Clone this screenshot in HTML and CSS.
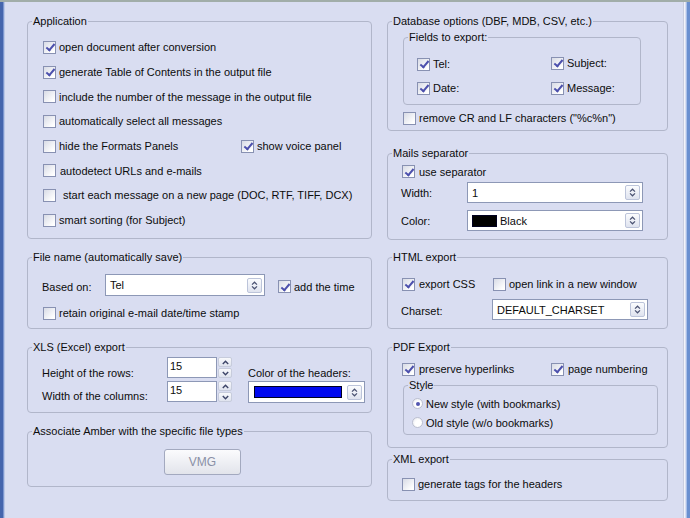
FILE: index.html
```html
<!DOCTYPE html>
<html>
<head>
<meta charset="utf-8">
<link rel="stylesheet" href="styles.css">
</head>
<body>
<div class="window">
  <div class="edge-l"></div>
  <div class="main">
    <div class="col col-left">
      <fieldset class="grp g-app">
        <legend>Application</legend>
        <div class="list">
          <div class="row"><div class="cb"><span class="box on"></span>open document after conversion</div></div>
          <div class="row"><div class="cb"><span class="box on"></span>generate Table of Contents in the output file</div></div>
          <div class="row"><div class="cb"><span class="box"></span>include the number of the message in the output file</div></div>
          <div class="row"><div class="cb"><span class="box"></span>automatically select all messages</div></div>
          <div class="row"><div class="cb w198"><span class="box"></span>hide the Formats Panels</div><div class="cb"><span class="box on"></span>show voice panel</div></div>
          <div class="row"><div class="cb"><span class="box"></span><span class="t4">autodetect URLs and e-mails</span></div></div>
          <div class="row"><div class="cb"><span class="box"></span><span class="t7">start each message on a new page (DOC, RTF, TIFF, DCX)</span></div></div>
          <div class="row"><div class="cb"><span class="box"></span>smart sorting (for Subject)</div></div>
        </div>
      </fieldset>

      <fieldset class="grp g-file">
        <legend>File name (automatically save)</legend>
        <div class="file-row1">
          <span class="lbl w63 low">Based on:</span>
          <div class="combo w160"><span class="ctext">Tel</span><span class="cbtn"><svg width="7" height="9" viewBox="0 0 7 9"><path d="M1 3.6 L3.5 1.2 L6 3.6 M1 5.4 L3.5 7.8 L6 5.4" fill="none" stroke="#4a5272" stroke-width="1.2"/></svg></span></div>
          <div class="cb ml13 low"><span class="box on"></span>add the time</div>
        </div>
        <div class="file-row2">
          <div class="cb"><span class="box"></span>retain original e-mail date/time stamp</div>
        </div>
      </fieldset>

      <fieldset class="grp g-xls">
        <legend>XLS (Excel) export</legend>
        <div class="xls-grid">
          <span class="lbl xl1">Height of the rows:</span>
          <div class="edit">15</div>
          <div class="spin"><span><svg width="7" height="5" viewBox="0 0 7 5"><path d="M0.8 4 L3.5 1.2 L6.2 4" fill="none" stroke="#3c4468" stroke-width="1.4"/></svg></span><span><svg width="7" height="5" viewBox="0 0 7 5"><path d="M0.8 1 L3.5 3.8 L6.2 1" fill="none" stroke="#3c4468" stroke-width="1.4"/></svg></span></div>
          <span class="lbl xl1 xc">Color of the headers:</span>
          <span class="lbl xl2">Width of the columns:</span>
          <div class="edit">15</div>
          <div class="spin"><span><svg width="7" height="5" viewBox="0 0 7 5"><path d="M0.8 4 L3.5 1.2 L6.2 4" fill="none" stroke="#3c4468" stroke-width="1.4"/></svg></span><span><svg width="7" height="5" viewBox="0 0 7 5"><path d="M0.8 1 L3.5 3.8 L6.2 1" fill="none" stroke="#3c4468" stroke-width="1.4"/></svg></span></div>
          <div class="combo ccolor"><span class="swatch blue"></span><span class="ctext"></span><span class="cbtn"><svg width="7" height="9" viewBox="0 0 7 9"><path d="M1 3.6 L3.5 1.2 L6 3.6 M1 5.4 L3.5 7.8 L6 5.4" fill="none" stroke="#4a5272" stroke-width="1.2"/></svg></span></div>
        </div>
      </fieldset>

      <fieldset class="grp g-assoc">
        <legend>Associate Amber with the specific file types</legend>
        <div class="btn-vmg">VMG</div>
      </fieldset>
    </div>

    <div class="col col-right">
      <fieldset class="grp g-db">
        <legend>Database options (DBF, MDB, CSV, etc.)</legend>
        <fieldset class="grp g-fields">
          <legend>Fields to export:</legend>
          <div class="fields-grid">
            <div class="cb"><span class="box on"></span>Tel:</div>
            <div class="cb up2"><span class="box on"></span>Subject:</div>
            <div class="cb"><span class="box on"></span>Date:</div>
            <div class="cb"><span class="box on"></span>Message:</div>
          </div>
        </fieldset>
        <div class="row20 ml15"><div class="cb"><span class="box"></span>remove CR and LF characters ("%c%n")</div></div>
      </fieldset>

      <fieldset class="grp g-mails">
        <legend>Mails separator</legend>
        <div class="mails-r1"><div class="cb"><span class="box on"></span><span class="t4">use separator</span></div></div>
        <div class="form-row mr1">
          <span class="lbl w66">Width:</span>
          <div class="combo w176"><span class="ctext">1</span><span class="cbtn"><svg width="7" height="9" viewBox="0 0 7 9"><path d="M1 3.6 L3.5 1.2 L6 3.6 M1 5.4 L3.5 7.8 L6 5.4" fill="none" stroke="#4a5272" stroke-width="1.2"/></svg></span></div>
        </div>
        <div class="form-row mr7">
          <span class="lbl w66">Color:</span>
          <div class="combo w176"><span class="swatch black"></span><span class="ctext">Black</span><span class="cbtn"><svg width="7" height="9" viewBox="0 0 7 9"><path d="M1 3.6 L3.5 1.2 L6 3.6 M1 5.4 L3.5 7.8 L6 5.4" fill="none" stroke="#4a5272" stroke-width="1.2"/></svg></span></div>
        </div>
      </fieldset>

      <fieldset class="grp g-html">
        <legend>HTML export</legend>
        <div class="row20 pt10 ml14">
          <div class="cb w91"><span class="box on"></span><span class="t4">export CSS</span></div>
          <div class="cb"><span class="box"></span>open link in a new window</div>
        </div>
        <div class="form-row mr5">
          <span class="lbl w91 low">Charset:</span>
          <div class="combo w156"><span class="ctext">DEFAULT_CHARSET</span><span class="cbtn"><svg width="7" height="9" viewBox="0 0 7 9"><path d="M1 3.6 L3.5 1.2 L6 3.6 M1 5.4 L3.5 7.8 L6 5.4" fill="none" stroke="#4a5272" stroke-width="1.2"/></svg></span></div>
        </div>
      </fieldset>

      <fieldset class="grp g-pdf">
        <legend>PDF Export</legend>
        <div class="row20 pt5 ml14">
          <div class="cb w149"><span class="box on"></span><span class="t4">preserve hyperlinks</span></div>
          <div class="cb"><span class="box on"></span><span class="t4">page numbering</span></div>
        </div>
        <fieldset class="grp g-style">
          <legend>Style</legend>
          <div class="radios">
            <div class="rb"><span class="radio on"></span>New style (with bookmarks)</div>
            <div class="rb"><span class="radio"></span>Old style (w/o bookmarks)</div>
          </div>
        </fieldset>
      </fieldset>

      <fieldset class="grp g-xml">
        <legend>XML export</legend>
        <div class="row20 pt8 ml14"><div class="cb"><span class="box"></span>generate tags for the headers</div></div>
      </fieldset>
    </div>
  </div>
  <div class="edge-r"></div>
</div>
</body>
</html>
```

FILE: styles.css
```css
* { box-sizing: border-box; }
html, body { margin: 0; padding: 0; }
body {
  width: 690px;
  height: 518px;
  overflow: hidden;
  background: #d9ddf1;
  font-family: "Liberation Sans", Arial, sans-serif;
  font-size: 11px;
  color: #0c0c0c;
}
.window {
  display: flex;
  height: 518px;
  border-top: 2px solid #a1ada9;
}
.edge-l {
  width: 5px;
  flex: none;
  background: linear-gradient(to right, #4565ad 0 3px, #7d96cf 3px 4px, #bac7e6 4px);
}
.edge-r {
  width: 7px;
  flex: none;
  margin-left: auto;
  background: linear-gradient(to right, #c9cde0 0 1px, #f3f4fa 1px 2px, #d9ddf1 2px 3px, #a9c0e8 3px 4px, #6a8fd0 4px);
}
.main {
  display: flex;
  gap: 15px;
  padding: 13px 0 0 22px;
}
.col { display: flex; flex-direction: column; }
.col > fieldset { flex: none; }
.col-left { width: 345px; }
.col-right { width: 281px; }

fieldset.grp {
  margin: 0;
  padding: 0;
  min-width: 0;
  border: 1px solid #b1b6ca;
  border-radius: 4px;
}
legend {
  padding: 0 1px;
  margin-left: 4px;
  height: 13px;
  line-height: 13px;
  white-space: nowrap;
}

fieldset.g-app { height: 224px; }
fieldset.g-file { height: 78px; margin-top: 12px; }
fieldset.g-xls { height: 72px; margin-top: 12px; }
fieldset.g-assoc { height: 62px; margin-top: 12px; }
fieldset.g-db { height: 116px; }
fieldset.g-fields { height: 74px; width: 238px; margin: 3px 0 0 15px; }
fieldset.g-mails { height: 93px; margin-top: 16px; }
fieldset.g-html { height: 78px; margin-top: 11px; }
fieldset.g-pdf { height: 107px; margin-top: 12px; }
fieldset.g-style { height: 56px; width: 255px; margin: 0 0 0 15px; }
fieldset.g-xml { height: 48px; margin-top: 5px; }

.list { padding: 7px 0 0 15px; }
.row { height: 24.7px; display: flex; align-items: center; }
.row20 { height: 20px; display: flex; align-items: center; box-sizing: content-box; }
.pt10 { padding-top: 10px; }
.pt8 { padding-top: 8px; }
.pt5 { padding-top: 5px; }
.ml13 { margin-left: 13px; }
.ml14 { margin-left: 14px; }
.ml15 { margin-left: 15px; margin-top: 3px; }
.w198 { width: 198px; }
.w63 { width: 63px; flex: none; }
.w66 { width: 66px; flex: none; }
.w91 { width: 91px; flex: none; }
.w149 { width: 149px; flex: none; }
.w160 { width: 160px; }
.w176 { width: 176px; }
.w156 { width: 156px; }
.t4 { margin-left: 1px; }
.t7 { margin-left: 4px; }
.low { padding-top: 3px; }
.up2 { margin-top: -2px; }

.cb {
  display: flex;
  align-items: center;
  white-space: nowrap;
}
.box {
  position: relative;
  flex: none;
  width: 13px;
  height: 13px;
  margin-right: 3px;
  border: 1px solid #8891b2;
  background: linear-gradient(135deg, #d8dbe6, #ffffff 85%);
}
.box.on::after {
  content: "";
  position: absolute;
  left: 3.5px;
  top: 0.5px;
  width: 3px;
  height: 7px;
  border: solid #4c50ad;
  border-width: 0 2px 2px 0;
  transform: rotate(40deg);
}
.rb {
  display: flex;
  align-items: center;
  height: 19px;
  white-space: nowrap;
}
.radio {
  flex: none;
  width: 11px;
  height: 11px;
  margin-right: 3px;
  border-radius: 50%;
  border: 1px solid #bcc0d0;
  background: radial-gradient(circle at 60% 60%, #ffffff 40%, #e2e4ec);
  display: flex;
  align-items: center;
  justify-content: center;
}
.radio.on::after {
  content: "";
  width: 4px;
  height: 4px;
  border-radius: 50%;
  background: #5256b0;
}
.radios { padding: 2px 0 0 8px; }

.lbl { white-space: nowrap; }

.combo {
  display: flex;
  align-items: center;
  height: 22px;
  flex: none;
  border: 1px solid #8d98b6;
  background: #fff;
  padding-left: 4px;
}
.ctext { flex: 1; white-space: nowrap; }
.cbtn {
  flex: none;
  width: 15px;
  height: 15px;
  margin-right: 2px;
  border: 1px solid #bcc4da;
  border-radius: 2px;
  background: linear-gradient(#fbfcfe, #dfe3ef);
  display: flex;
  align-items: center;
  justify-content: center;
}
.swatch {
  flex: none;
  height: 12px;
  border: 1px solid #000020;
  margin-right: 3px;
}
.swatch.blue { width: 88px; background: #0008f0; }
.swatch.black { width: 25px; background: #000; }
.ccolor { padding-left: 5px; margin-left: 16px; width: 117px; }

.file-row1 {
  display: flex;
  align-items: center;
  height: 22px;
  margin: 10px 0 0 14px;
}
.file-row2 {
  display: flex;
  align-items: center;
  height: 22px;
  margin: 6px 0 0 15px;
}

.xls-grid {
  display: grid;
  grid-template-columns: 125px 50px 15px 133px;
  grid-template-rows: 21px 22px;
  row-gap: 3px;
  padding: 3px 0 0 14px;
}
.xc { margin-left: 16px; }
.xl1 { align-self: end; line-height: 13px; margin-bottom: -2px; }
.xl2 { align-self: end; line-height: 13px; margin-bottom: 0; }
.edit {
  height: 21px;
  border: 1px solid #8d98b6;
  background: #fff;
  padding: 1px 0 0 2px;
  line-height: 14px;
}
.spin {
  display: flex;
  flex-direction: column;
  gap: 1px;
  height: 21px;
  margin-left: 1px;
}
.spin span {
  flex: 1;
  display: flex;
  align-items: center;
  justify-content: center;
  border-radius: 2px;
  background: linear-gradient(#f8f9fc, #dfe3ee);
  border: 1px solid #c7ccdc;
}

.btn-vmg {
  width: 77px;
  height: 26px;
  margin: 11px 0 0 136px;
  border: 1px solid #a3a9bf;
  border-radius: 3px;
  background: linear-gradient(#fbfbfd, #e2e4eb);
  color: #8a90a6;
  font-size: 12px;
  display: flex;
  align-items: center;
  justify-content: center;
}

.fields-grid {
  display: grid;
  grid-template-columns: 134px auto;
  grid-auto-rows: 20px;
  row-gap: 4px;
  padding: 10px 0 0 13px;
}

.mails-r1 {
  height: 19px;
  display: flex;
  align-items: center;
  margin: 2px 0 0 14px;
}
.form-row {
  display: flex;
  align-items: center;
  height: 21px;
  margin-left: 13px;
}
.form-row .combo { height: 21px; }
.mr1 { margin-top: 1px; }
.mr7 { margin-top: 7px; }
.mr5 { margin-top: 5px; }
```
